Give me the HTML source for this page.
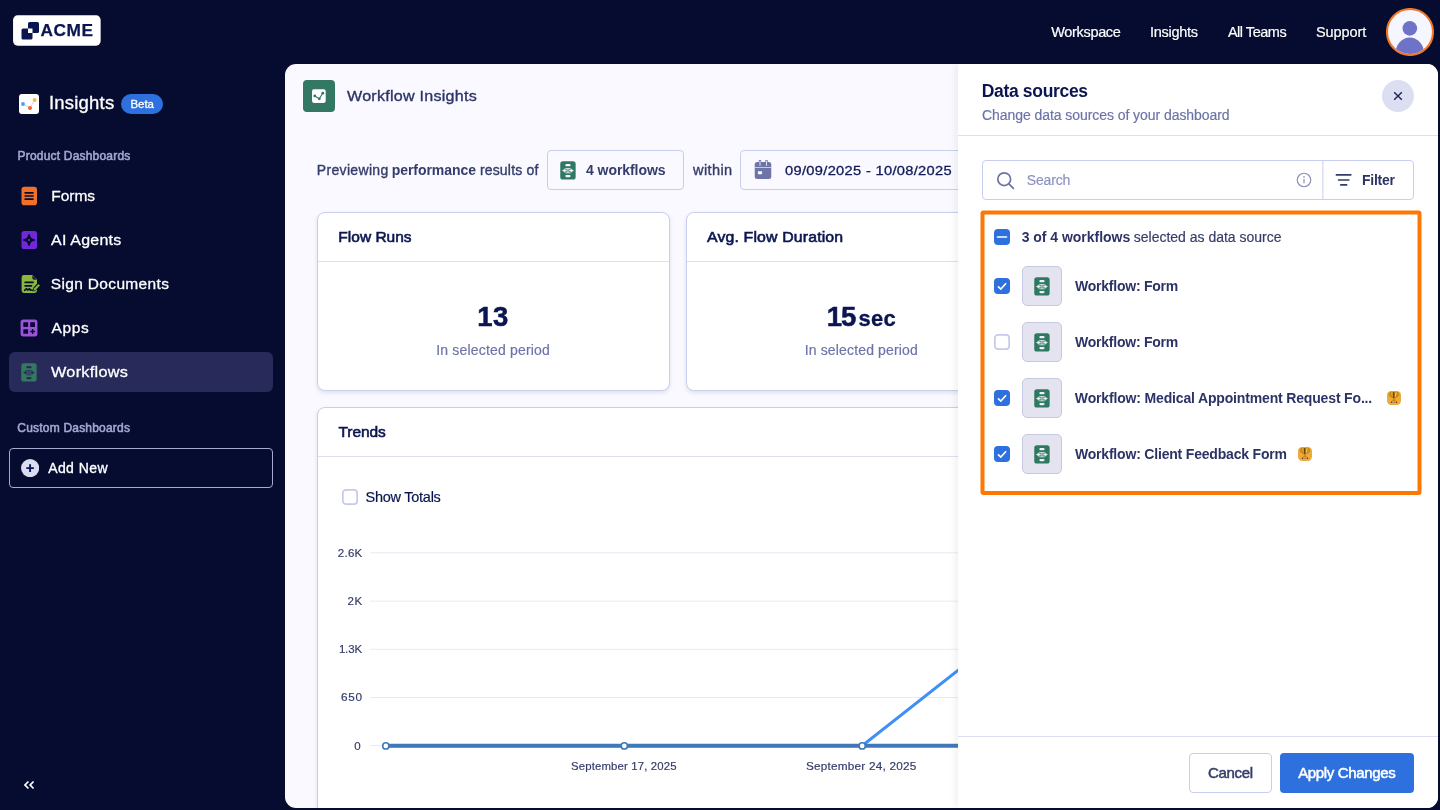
<!DOCTYPE html>
<html>
<head>
<meta charset="utf-8">
<title>Workflow Insights</title>
<style>
*{box-sizing:border-box;margin:0;padding:0}
html,body{width:1440px;height:810px;overflow:hidden}
body{background:#060b30;font-family:"Liberation Sans",sans-serif;position:relative;color:#0a1551}
.abs{position:absolute}
.t{position:absolute;white-space:nowrap;line-height:1}
/* ---------- top bar ---------- */
#logo{left:13px;top:15px;width:88px;height:31px}
.nav{color:#fff;font-size:14.5px;top:25px}
/* ---------- sidebar ---------- */
.sec{color:#a3a8d0;font-size:12px;font-weight:bold;left:17px}
.item{color:#fff;font-size:16px;left:51px}
#sel{left:9px;top:352px;width:264px;height:40px;background:#282b59;border-radius:6px}
#addnew{left:9px;top:448px;width:264px;height:40px;border:1px solid #a6aace;border-radius:4px}
/* ---------- main panel ---------- */
#main{left:285px;top:64px;width:1153px;height:744px;background:#f9f9ff;border-radius:11px;overflow:hidden}
.card{position:absolute;background:#fff;border:1px solid #c8ceed;border-radius:8px;box-shadow:0 2px 4px rgba(30,30,55,.11)}
.chip{position:absolute;border:1px solid #c8ceed;border-radius:4px;height:40px;top:86px}
/* ---------- side panel ---------- */
#panel{left:673px;top:0;width:480px;height:744px;background:#fff;box-shadow:-2px 0 7px rgba(30,30,50,.07)}
.cb{position:absolute;width:16px;height:16px;border-radius:4px;background:#2e71de}
.cb0{position:absolute;width:16px;height:16px}
.ib{position:absolute;left:64px;width:40px;height:40px;border-radius:5px;background:#e3e4ef;border:1px solid #c6c9e2}
.rt{left:116px;font-size:14.5px;font-weight:bold;color:#2c3366}
</style>
</head>
<body>
<svg width="0" height="0" style="position:absolute">
  <defs>
    <symbol id="wf" viewBox="0 0 16 19">
      <rect x="0.25" y="0.35" width="15.4" height="18.2" rx="2.6" fill="var(--g,#2f7862)"/>
      <g fill="currentColor">
        <rect x="5.3" y="3" width="5.3" height="2.3" rx="1.15"/>
        <rect x="5.3" y="13.95" width="5.3" height="2.3" rx="1.15"/>
        <path d="M2 9.6 L4.8 7.9 V8.6 H6.6 V10.6 H4.8 V11.3 Z"/>
        <path d="M13.9 9.6 L11.1 7.9 V8.6 H9.3 V10.6 H11.1 V11.3 Z"/>
        <rect x="7.45" y="7.3" width="1" height="4.6"/>
        <rect x="5.6" y="6.9" width="4.7" height=".75" rx=".3"/>
        <rect x="5.6" y="11.6" width="4.7" height=".75" rx=".3"/>
      </g>
      <path d="M4.3 8 Q4.9 7.2 5.8 7.25 M11.6 8 Q11 7.2 10.1 7.25 M4.3 11.2 Q4.9 12 5.8 11.95 M11.6 11.2 Q11 12 10.1 11.95" fill="none" stroke="currentColor" stroke-width=".55"/>
    </symbol>
    <symbol id="trophy" viewBox="0 0 14 14">
      <rect x="0" y="0" width="14" height="14" rx="4.2" fill="#eeaa3c"/>
      <path d="M3.4 2.1 C1.5 2 1.6 5.6 4.7 6 M10.6 2.1 C12.5 2 12.4 5.6 9.3 6" fill="none" stroke="#b9820f" stroke-width=".95"/>
      <path d="M3 1.15 H11 C11 4.9 9.6 6.8 7.6 7.3 V9.3 H6.4 V7.3 C4.4 6.8 3 4.9 3 1.15 Z" fill="#c48d14" stroke="#b07a0a" stroke-width=".3"/>
      <rect x="6.05" y="1.2" width="1.3" height="5.7" fill="#74380a"/>
      <path d="M8.5 1.4 L9.7 1.4 L8.8 5.5 L8 5.9 Z" fill="#f6da6e"/>
      <path d="M4.9 4.9 L4.1 1.5 L5.1 1.4 L5.7 5.5 Z" fill="#e3b63a"/>
      <path d="M4.9 10.2 L5.5 9.2 H8.5 L9.1 10.2 Z" fill="#b9820f"/>
      <path d="M3.6 12.1 L4.4 10.15 H9.6 L10.4 12.1 Z" fill="#85360e"/>
      <rect x="4.9" y="10.5" width="4.2" height=".95" fill="#fbeeb8"/>
    </symbol>
  </defs>
</svg>

<!-- ================= TOP BAR ================= -->
<div id="logo" class="abs">
  <svg class="abs" style="left:0;top:0" width="88" height="31"><rect x="0.05" y="0.3" width="87.6" height="30.4" rx="4.6" fill="#fff"/></svg>
  <svg class="abs" style="left:8px;top:7px" width="18" height="18" viewBox="0 0 18 18">
    <rect x="7" y="0" width="11" height="11" rx="1.6" fill="#0a1551"/>
    <rect x="0.5" y="6.5" width="11" height="11" rx="1.6" fill="#0a1551"/>
    <rect x="7" y="6.5" width="4.5" height="4.5" fill="#fff"/>
  </svg>
</div>
<svg class="abs" style="left:1386.1px;top:8px" width="48" height="48" viewBox="0 0 48 48">
  <defs><clipPath id="avc"><circle cx="24" cy="24" r="22"/></clipPath></defs>
  <circle cx="24" cy="24" r="23" fill="#f5f6ff" stroke="#f07626" stroke-width="2.1"/>
  <g clip-path="url(#avc)" fill="#6e73c8">
    <circle cx="23.8" cy="20.4" r="7.3"/>
    <ellipse cx="23.8" cy="45.6" rx="14.3" ry="16"/>
  </g>
</svg>

<!-- ================= SIDEBAR ================= -->
<div class="abs" style="left:19px;top:94px;width:20px;height:20px;background:#fff;border-radius:3px">
  <svg width="20" height="20" viewBox="0 0 20 20">
    <polyline points="4,10 11,14 15.5,6" fill="none" stroke="#c9cdf0" stroke-width="0.9"/>
    <circle cx="4" cy="10" r="1.9" fill="#4a9cf5"/>
    <circle cx="11" cy="14" r="2" fill="#f0672a"/>
    <circle cx="15.6" cy="6" r="2" fill="#f7b84a"/>
  </svg>
</div>
<div class="abs" style="left:121.4px;top:94px;width:41.2px;height:20px;border-radius:10px;background:#2e71de"></div>


<!-- Forms -->
<svg class="abs" style="left:21px;top:186px" width="17" height="20" viewBox="0 0 17 20">
  <rect x="0.5" y="0.8" width="15.5" height="18.4" rx="2.8" fill="#f0702a"/>
  <rect x="3.4" y="6" width="9.3" height="1.7" rx=".6" fill="#060b30"/>
  <rect x="3.4" y="9.15" width="9.3" height="1.7" rx=".6" fill="#060b30"/>
  <rect x="3.4" y="12.3" width="9.3" height="1.7" rx=".6" fill="#060b30"/>
</svg>

<!-- AI Agents -->
<svg class="abs" style="left:21px;top:230px" width="17" height="20" viewBox="0 0 17 20">
  <rect x="0.5" y="0.9" width="15.5" height="18.2" rx="2.6" fill="#7028d8"/>
  <path d="M8 4.2 L9.7 8.3 L13.8 10 L9.7 11.7 L8 15.8 L6.3 11.7 L2.2 10 L6.3 8.3 Z" fill="#060b30" stroke="#060b30" stroke-width="1" stroke-linejoin="round"/>
  <rect x="7.1" y="9.1" width="1.8" height="1.8" fill="#7028d8"/>
</svg>

<!-- Sign Documents -->
<svg class="abs" style="left:21px;top:274px" width="20" height="20" viewBox="0 0 20 20">
  <path d="M3 1 H11.5 L16 5.5 V9.8 L12.5 13.5 L11 17.2 L14.2 16.4 L16 14.6 V16.6 A2.4 2.4 0 0 1 13.6 19 H3 A2.4 2.4 0 0 1 0.6 16.6 V3.4 A2.4 2.4 0 0 1 3 1 Z" fill="#8bb83a"/>
  <path d="M11.3 1.2 V3.8 A1.9 1.9 0 0 0 13.2 5.7 H15.8 Z" fill="#060b30" opacity=".9"/>
  <rect x="3.3" y="7.4" width="9.5" height="1.9" rx=".7" fill="#060b30"/>
  <rect x="3.3" y="10.9" width="8" height="1.9" rx=".7" fill="#060b30"/>
  <path d="M3.6 16.4 L5.6 14.6 L6.6 16.2 L8.6 14.6 L9.2 16.2 L10.6 16" fill="none" stroke="#060b30" stroke-width="1.5" stroke-linecap="round" stroke-linejoin="round"/>
  <path d="M17.4 9.8 L19.2 11.6 L14.4 16.4 L11.9 17.1 L12.6 14.6 Z" fill="#8bb83a" stroke="#060b30" stroke-width=".7"/>
</svg>

<!-- Apps -->
<svg class="abs" style="left:20px;top:319px" width="18" height="18" viewBox="0 0 18 18">
  <rect x="0.6" y="0.6" width="16.8" height="16.8" rx="2.6" fill="#9b53d9"/>
  <rect x="3.3" y="3.3" width="4.8" height="4.6" rx=".5" fill="#060b30"/>
  <rect x="10.2" y="3.3" width="4.8" height="4.6" rx=".5" fill="#060b30"/>
  <rect x="3.3" y="10.2" width="4.8" height="4.6" rx=".5" fill="#060b30"/>
  <path d="M12.6 10.1 V14.9 M10.2 12.5 H15" stroke="#060b30" stroke-width="1.4" fill="none"/>
</svg>

<!-- Workflows (selected) -->
<div id="sel" class="abs"></div>
<svg class="abs" style="left:21.3px;top:362.5px;color:#282b59;--g:#34795f" width="16" height="19"><use href="#wf"/></svg>

<div id="addnew" class="abs"></div>
<svg class="abs" style="left:21px;top:459px" width="18" height="18" viewBox="0 0 18 18">
  <circle cx="9.1" cy="9.1" r="9.1" fill="#d9dcf3"/>
  <path d="M9.1 5.3 V12.9 M5.3 9.1 H12.9" stroke="#0a1551" stroke-width="1.9" fill="none"/>
</svg>

<svg class="abs" style="left:23px;top:779px" width="12" height="12" viewBox="0 0 12 12">
  <path d="M5.4 2.5 L2 6 L5.4 9.5 M10.55 2.5 L7.15 6 L10.55 9.5" stroke="#fff" stroke-width="1.75" fill="none"/>
</svg>

<!-- ================= MAIN PANEL ================= -->
<div id="main" class="abs">
  <!-- header -->
  <div class="abs" style="left:18px;top:16px;width:32px;height:32px;border-radius:4px;background:#347762">
    <svg width="32" height="32" viewBox="0 0 32 32">
      <rect x="9" y="9.2" width="13.7" height="13.7" rx="1.8" fill="#fff"/>
      <polyline points="11.8,15.9 16.3,18.7 19.7,13.3" fill="none" stroke="#347762" stroke-width="1.15" />
      <circle cx="11.8" cy="15.9" r="1.4" fill="#347762"/>
      <circle cx="16.3" cy="18.8" r="1.4" fill="#347762"/>
      <circle cx="19.8" cy="13.2" r="1.4" fill="#347762"/>
    </svg>
  </div>

  <!-- filter row -->
  <div class="chip" style="left:262px;width:137px"></div>
  <svg class="abs" style="left:275px;top:96.6px;color:#f4f5fd" width="16" height="19"><use href="#wf"/></svg>
  <div class="chip" style="left:455px;width:300px"></div>
  <svg class="abs" style="left:469px;top:96px" width="18" height="20" viewBox="0 0 18 20">
    <path d="M6 0.9 V3 M12.5 0.9 V3" stroke="#6e73a8" stroke-width="2.4" stroke-linecap="round"/>
    <rect x="0.75" y="2.1" width="16.5" height="16.9" rx="2.5" fill="#6e73a8"/>
    <path d="M6 1.2 V5.4 M12.5 1.2 V5.4" stroke="#eceefb" stroke-width=".9" stroke-linecap="round"/>
    <rect x="0.75" y="7.1" width="16.5" height=".8" fill="#dfe1f5"/>
    <rect x="3.9" y="11.2" width="4.2" height="3" rx=".4" fill="#f9f9ff"/>
  </svg>

  <!-- stat cards -->
  <div class="card" style="left:32px;top:148px;width:353px;height:179px"></div>
  <div class="abs" style="left:33px;top:197px;width:351px;height:1px;background:#dcdff2"></div>

  <div class="card" style="left:401px;top:148px;width:352px;height:179px"></div>
  <div class="abs" style="left:402px;top:197px;width:350px;height:1px;background:#dcdff2"></div>

  <!-- trends -->
  <div class="card" style="left:32px;top:343px;width:1088px;height:420px"></div>
  <div class="abs" style="left:33px;top:392px;width:1086px;height:1px;background:#dcdff2"></div>
  <div class="cb0" style="left:57px;top:425px"><svg width="16" height="16" style="display:block"><rect x=".85" y=".85" width="14.3" height="14.3" rx="3.2" fill="#fff" stroke="#c5caec" stroke-width="1.7"/></svg></div>

  <svg class="abs" style="left:33px;top:470px" width="720" height="274" viewBox="0 0 720 274">
    <g stroke="#e9e9f6" stroke-width="1">
      <line x1="52" y1="18.8" x2="720" y2="18.8"/>
      <line x1="52" y1="67.2" x2="720" y2="67.2"/>
      <line x1="52" y1="115.3" x2="720" y2="115.3"/>
      <line x1="52" y1="163.5" x2="720" y2="163.5"/>
      <line x1="52" y1="211.5" x2="720" y2="211.5"/>
    </g>
    <polyline points="68,211.8 306,211.8 544.2,211.8 782,24.6" fill="none" stroke="#3f8ff7" stroke-width="3"/>
    <line x1="68" y1="211.8" x2="720" y2="211.8" stroke="#4079b9" stroke-width="4"/>
    <g fill="#fff" stroke="#4079b9" stroke-width="1.6">
      <circle cx="67.8" cy="211.9" r="3.1"/>
      <circle cx="306.3" cy="211.9" r="3.1"/>
      <circle cx="544.2" cy="211.9" r="3.1"/>
    </g>
  </svg>
  <div id="panel" class="abs">
    <div class="abs" style="left:424px;top:16px;width:32px;height:32px;border-radius:16px;background:#dcdff2">
      <svg width="32" height="32" viewBox="0 0 32 32"><path d="M12.2 12.2 L19.8 19.8 M19.8 12.2 L12.2 19.8" stroke="#1a2156" stroke-width="1.4" fill="none"/></svg>
    </div>
    <div class="abs" style="left:0;top:71px;width:480px;height:1px;background:#dcdff2"></div>

    <!-- search -->
    <div class="abs" style="left:24px;top:96px;width:432px;height:40px;border:1px solid #c8ceed;border-radius:4px"></div>
    <svg class="abs" style="left:362px;top:97px" width="6" height="38"><line x1="2.85" y1="0" x2="2.85" y2="38" stroke="#c8ceed" stroke-width="1"/></svg>
    <svg class="abs" style="left:38px;top:107px" width="20" height="20" viewBox="0 0 20 20">
      <circle cx="8.2" cy="8.2" r="6.4" fill="none" stroke="#6c73a8" stroke-width="1.7"/>
      <path d="M12.9 12.9 L17.4 17.4" stroke="#6c73a8" stroke-width="1.7" stroke-linecap="round"/>
    </svg>
    <svg class="abs" style="left:337.5px;top:108px" width="16" height="16" viewBox="0 0 16 16">
      <circle cx="8" cy="8" r="6.75" fill="none" stroke="#8a8fbc" stroke-width="1.2"/>
      <path d="M8 7 V11.3" stroke="#8a8fbc" stroke-width="1.2"/>
      <circle cx="8" cy="4.9" r=".8" fill="#8a8fbc"/>
    </svg>
    <svg class="abs" style="left:377px;top:108px" width="18" height="16" viewBox="0 0 18 16">
      <path d="M1.4 2.8 H15.8 M3.6 8 H13.8 M5.8 12.9 H11.6" stroke="#343c6a" stroke-width="1.7" stroke-linecap="round" fill="none"/>
    </svg>

    <!-- highlighted list -->
    <svg class="abs" style="left:20px;top:144px" width="446" height="292"><rect x="4.5" y="4.5" width="437" height="280.5" rx="1" fill="none" stroke="#fd7702" stroke-width="4"/></svg>

    <div class="cb" style="left:36px;top:165px"><svg width="16" height="16"><rect x="2.7" y="7.15" width="10.6" height="1.7" rx=".85" fill="#fff"/></svg></div>

    <!-- rows -->
    <div class="cb" style="left:36px;top:214px"><svg width="16" height="16"><path d="M4 8.3 L6.8 11 L12.1 5.2" stroke="#fff" stroke-width="1.6" fill="none"/></svg></div>
    <div class="ib" style="top:202px"><svg class="abs" style="left:11.3px;top:9.7px;color:#eef0f8" width="16" height="19"><use href="#wf"/></svg></div>

    <div class="cb0" style="left:36px;top:270px"><svg width="16" height="16" style="display:block"><rect x=".85" y=".85" width="14.3" height="14.3" rx="3.2" fill="#fff" stroke="#c5caec" stroke-width="1.7"/></svg></div>
    <div class="ib" style="top:258px"><svg class="abs" style="left:11.3px;top:9.7px;color:#eef0f8" width="16" height="19"><use href="#wf"/></svg></div>

    <div class="cb" style="left:36px;top:326px"><svg width="16" height="16"><path d="M4 8.3 L6.8 11 L12.1 5.2" stroke="#fff" stroke-width="1.6" fill="none"/></svg></div>
    <div class="ib" style="top:314px"><svg class="abs" style="left:11.3px;top:9.7px;color:#eef0f8" width="16" height="19"><use href="#wf"/></svg></div>

    <div class="cb" style="left:36px;top:382px"><svg width="16" height="16"><path d="M4 8.3 L6.8 11 L12.1 5.2" stroke="#fff" stroke-width="1.6" fill="none"/></svg></div>
    <div class="ib" style="top:370px"><svg class="abs" style="left:11.3px;top:9.7px;color:#eef0f8" width="16" height="19"><use href="#wf"/></svg></div>

    <svg class="abs" style="left:429px;top:327px" width="14" height="14"><use href="#trophy"/></svg>
    <svg class="abs" style="left:339.5px;top:383px" width="14" height="14"><use href="#trophy"/></svg>

    <!-- footer -->
    <div class="abs" style="left:0;top:672px;width:480px;height:1px;background:#dcdff2"></div>
    <div class="abs" style="left:231px;top:689px;width:83px;height:40px;border:1px solid #c8ceed;border-radius:4px;background:#fff"></div>
    <div class="abs" style="left:322px;top:689px;width:134px;height:40px;border-radius:4px;background:#2e71de"></div>
  </div>
</div>

<!-- ============ TEXT LAYER ============ -->
<div id="txt" style="position:absolute;left:0;top:0;width:1440px;height:810px;will-change:transform">
<div class="t" style="left:40.39px;top:22.26px;font-size:17.3px;color:#0a1551;letter-spacing:0.575px;font-weight:bold;-webkit-text-stroke:0.25px #0a1551">ACME</div>
<div class="t" style="left:1051.23px;top:25.13px;font-size:14.5px;color:#ffffff;letter-spacing:-0.327px;-webkit-text-stroke:0.2px #ffffff">Workspace</div>
<div class="t" style="left:1150.00px;top:25.13px;font-size:14.5px;color:#ffffff;letter-spacing:-0.286px;-webkit-text-stroke:0.2px #ffffff">Insights</div>
<div class="t" style="left:1227.93px;top:25.13px;font-size:14.5px;color:#ffffff;letter-spacing:-0.484px;-webkit-text-stroke:0.2px #ffffff">All Teams</div>
<div class="t" style="left:1315.98px;top:25.13px;font-size:14.5px;color:#ffffff;letter-spacing:-0.074px;-webkit-text-stroke:0.2px #ffffff">Support</div>
<div class="t" style="left:48.96px;top:95.09px;font-size:17.5px;color:#ffffff;letter-spacing:0.187px;-webkit-text-stroke:0.3px #ffffff;transform:scaleX(1.0572);transform-origin:0 0">Insights</div>
<div class="t" style="left:130.50px;top:99.27px;font-size:11.5px;color:#ffffff;letter-spacing:-0.086px;-webkit-text-stroke:0.3px #ffffff">Beta</div>
<div class="t" style="left:17.50px;top:150.34px;font-size:12px;color:#a3a8d0;letter-spacing:0.199px;-webkit-text-stroke:0.55px #a3a8d0">Product Dashboards</div>
<div class="t" style="left:51.34px;top:188.28px;font-size:15.5px;color:#ffffff;letter-spacing:-0.062px;-webkit-text-stroke:0.3px #ffffff">Forms</div>
<div class="t" style="left:51.15px;top:232.48px;font-size:15.5px;color:#ffffff;letter-spacing:0.225px;-webkit-text-stroke:0.3px #ffffff;transform:scaleX(1.0302);transform-origin:0 0">AI Agents</div>
<div class="t" style="left:50.82px;top:276.08px;font-size:15.5px;color:#ffffff;letter-spacing:0.337px;-webkit-text-stroke:0.3px #ffffff">Sign Documents</div>
<div class="t" style="left:51.59px;top:320.08px;font-size:15.5px;color:#ffffff;letter-spacing:0.585px;-webkit-text-stroke:0.3px #ffffff">Apps</div>
<div class="t" style="left:51.35px;top:364.38px;font-size:15.5px;color:#ffffff;letter-spacing:0.289px;-webkit-text-stroke:0.3px #ffffff;transform:scaleX(1.0474);transform-origin:0 0">Workflows</div>
<div class="t" style="left:17.29px;top:422.04px;font-size:12px;color:#a3a8d0;letter-spacing:0.203px;-webkit-text-stroke:0.55px #a3a8d0">Custom Dashboards</div>
<div class="t" style="left:48.14px;top:461.25px;font-size:14px;color:#ffffff;letter-spacing:0.432px;-webkit-text-stroke:0.35px #ffffff">Add New</div>
<div class="t" style="left:347.19px;top:88.38px;font-size:15.5px;color:#2c3366;letter-spacing:0.234px;-webkit-text-stroke:0.35px #2c3366;transform:scaleX(1.0390);transform-origin:0 0">Workflow Insights</div>
<div class="t" style="left:316.76px;top:163.15px;font-size:14px;color:#343c6a;letter-spacing:0.338px;-webkit-text-stroke:0.35px #343c6a">Previewing</div>
<div class="t" style="left:391.78px;top:163.15px;font-size:14px;color:#343c6a;letter-spacing:-0.065px;font-weight:bold">performance</div>
<div class="t" style="left:479.88px;top:163.15px;font-size:14px;color:#343c6a;letter-spacing:0.183px;-webkit-text-stroke:0.35px #343c6a">results of</div>
<div class="t" style="left:586.03px;top:163.15px;font-size:14px;color:#343c6a;letter-spacing:-0.061px;font-weight:bold">4 workflows</div>
<div class="t" style="left:693.24px;top:163.15px;font-size:14px;color:#343c6a;letter-spacing:0.372px;-webkit-text-stroke:0.35px #343c6a;transform:scaleX(1.0405);transform-origin:0 0">within</div>
<div class="t" style="left:784.98px;top:164.00px;font-size:13px;color:#101959;letter-spacing:0.275px;-webkit-text-stroke:0.3px #101959;transform:scaleX(1.1283);transform-origin:0 0">09/09/2025 - 10/08/2025</div>
<div class="t" style="left:338.35px;top:229.38px;font-size:15.5px;color:#0a1551;letter-spacing:0.000px;-webkit-text-stroke:0.6px #0a1551">Flow Runs</div>
<div class="t" style="left:707.37px;top:229.38px;font-size:15.5px;color:#0a1551;letter-spacing:0.145px;-webkit-text-stroke:0.6px #0a1551;transform:scaleX(1.0227);transform-origin:0 0">Avg. Flow Duration</div>
<div class="t" style="left:477.35px;top:302.97px;font-size:27.5px;color:#0a1551;letter-spacing:0.373px;font-weight:bold;-webkit-text-stroke:0.5px #0a1551">13</div>
<div class="t" style="left:826.69px;top:302.97px;font-size:27.5px;color:#0a1551;letter-spacing:-1.071px;font-weight:bold;-webkit-text-stroke:0.5px #0a1551">15</div>
<div class="t" style="left:858.61px;top:307.63px;font-size:22px;color:#0a1551;letter-spacing:0.156px;font-weight:bold;-webkit-text-stroke:0.3px #0a1551">sec</div>
<div class="t" style="left:436.20px;top:343.15px;font-size:14px;color:#6c73a8;letter-spacing:0.182px;-webkit-text-stroke:0.18px #6c73a8">In selected period</div>
<div class="t" style="left:804.70px;top:343.15px;font-size:14px;color:#6c73a8;letter-spacing:0.153px;-webkit-text-stroke:0.18px #6c73a8">In selected period</div>
<div class="t" style="left:338.59px;top:424.38px;font-size:15.5px;color:#0a1551;letter-spacing:-0.108px;-webkit-text-stroke:0.6px #0a1551">Trends</div>
<div class="t" style="left:365.54px;top:489.73px;font-size:14.5px;color:#0a1551;letter-spacing:-0.258px;-webkit-text-stroke:0.2px #0a1551">Show Totals</div>
<div class="t" style="left:337.78px;top:547.87px;font-size:11.5px;color:#343c6a;letter-spacing:0.275px;-webkit-text-stroke:0.18px #343c6a">2.6K</div>
<div class="t" style="left:347.58px;top:595.77px;font-size:11.5px;color:#343c6a;letter-spacing:0.487px;-webkit-text-stroke:0.18px #343c6a">2K</div>
<div class="t" style="left:338.89px;top:643.77px;font-size:11.5px;color:#343c6a;letter-spacing:-0.160px;-webkit-text-stroke:0.18px #343c6a">1.3K</div>
<div class="t" style="left:341.00px;top:692.07px;font-size:11.5px;color:#343c6a;letter-spacing:0.631px;-webkit-text-stroke:0.18px #343c6a;transform:scaleX(1.0262);transform-origin:0 0">650</div>
<div class="t" style="left:354.37px;top:740.87px;font-size:11.5px;color:#343c6a;letter-spacing:0.000px;-webkit-text-stroke:0.18px #343c6a">0</div>
<div class="t" style="left:571.11px;top:761.09px;font-size:11px;color:#343c6a;letter-spacing:0.136px;-webkit-text-stroke:0.18px #343c6a;transform:scaleX(1.0352);transform-origin:0 0">September 17, 2025</div>
<div class="t" style="left:806.43px;top:761.09px;font-size:11px;color:#343c6a;letter-spacing:0.189px;-webkit-text-stroke:0.18px #343c6a;transform:scaleX(1.0713);transform-origin:0 0">September 24, 2025</div>
<div class="t" style="left:981.70px;top:82.59px;font-size:17.5px;color:#0a1551;letter-spacing:-0.322px;font-weight:bold">Data sources</div>
<div class="t" style="left:981.96px;top:108.15px;font-size:14px;color:#6c73a8;letter-spacing:-0.060px;-webkit-text-stroke:0.18px #6c73a8">Change data sources of your dashboard</div>
<div class="t" style="left:1026.82px;top:173.40px;font-size:14px;color:#8d92c0;letter-spacing:-0.163px;-webkit-text-stroke:0.18px #8d92c0">Search</div>
<div class="t" style="left:1361.96px;top:173.15px;font-size:14px;color:#2c3366;letter-spacing:-0.246px;font-weight:bold">Filter</div>
<div class="t" style="left:1021.74px;top:230.15px;font-size:14px;color:#2c3366;letter-spacing:-0.029px;font-weight:bold">3 of 4 workflows</div>
<div class="t" style="left:1133.77px;top:230.15px;font-size:14px;color:#343c6a;letter-spacing:-0.006px;-webkit-text-stroke:0.18px #343c6a">selected as data source</div>
<div class="t" style="left:1074.97px;top:279.15px;font-size:14px;color:#2c3366;letter-spacing:-0.229px;font-weight:bold">Workflow: Form</div>
<div class="t" style="left:1074.97px;top:335.15px;font-size:14px;color:#2c3366;letter-spacing:-0.229px;font-weight:bold">Workflow: Form</div>
<div class="t" style="left:1074.85px;top:391.15px;font-size:14px;color:#2c3366;letter-spacing:-0.160px;font-weight:bold">Workflow: Medical Appointment Request Fo...</div>
<div class="t" style="left:1074.89px;top:447.15px;font-size:14px;color:#2c3366;letter-spacing:-0.186px;font-weight:bold">Workflow: Client Feedback Form</div>
<div class="t" style="left:1207.92px;top:765.30px;font-size:15px;color:#343c6a;letter-spacing:-0.284px;-webkit-text-stroke:0.5px #343c6a">Cancel</div>
<div class="t" style="left:1298.23px;top:765.30px;font-size:15px;color:#ffffff;letter-spacing:-0.354px;-webkit-text-stroke:0.5px #ffffff">Apply Changes</div>
</div>
</body>
</html>
